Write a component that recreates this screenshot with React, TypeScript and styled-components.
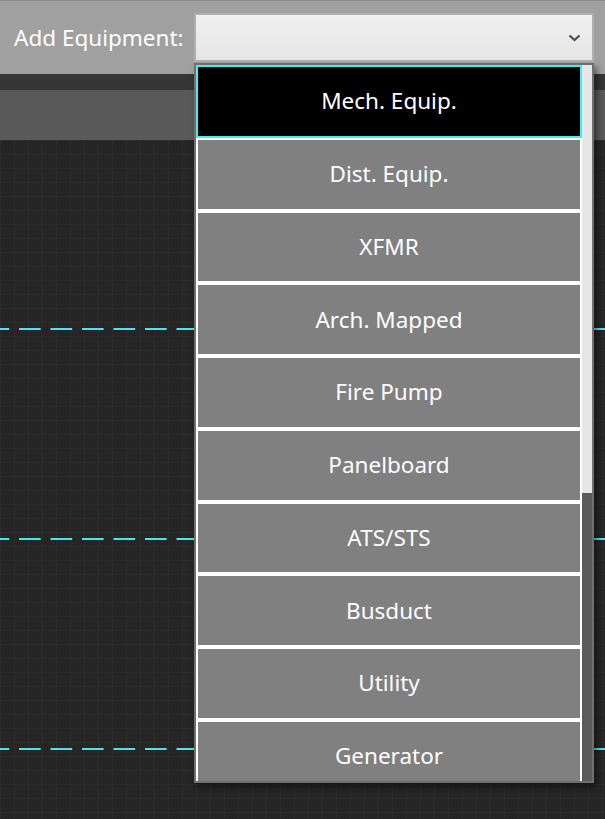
import React from "react";
import styled, { createGlobalStyle } from "styled-components";

const Global = createGlobalStyle`
  html, body { margin: 0; padding: 0; background: #252525; }
  body { width: 605px; height: 819px; overflow: hidden; font-family: "Noto Sans", "Open Sans", sans-serif; }
  #root { width: 605px; height: 819px; }
`;

const Page = styled.div`
  position: relative;
  width: 605px;
  height: 819px;
  display: flex;
  flex-direction: column;
  overflow: hidden;
`;

const TopBar = styled.div`
  height: 74px;
  border-top: 1px solid #8c8c8c;
  background: #a0a0a0;
  display: grid;
  grid-template-columns: 180px 400px;
  align-items: start;
  padding: 12px 0 0 14px;
  box-sizing: border-box;
`;

const Label = styled.div`
  color: #ffffff;
  font-size: 22.5px;
  line-height: 28px;
  padding-top: 11px;
  white-space: nowrap;
`;

const Combo = styled.div`
  height: 49px;
  box-sizing: border-box;
  border: 2px solid #b0b0b0;
  background: linear-gradient(#f0f0f0, #e5e5e5);
  display: flex;
  align-items: center;
  justify-content: flex-end;
  padding-right: 11px;
`;

const DarkBand = styled.div`
  height: 16px;
  background: #363636;
`;

const MidBand = styled.div`
  height: 50px;
  background: #595959;
`;

const Canvas = styled.div`
  flex: 1;
  background-color: #252525;
  background-image:
    linear-gradient(to right, #2b2b2b 1px, transparent 1px),
    linear-gradient(to bottom, #2b2b2b 1px, transparent 1px);
  background-size: 14px 14px;
  display: flex;
  flex-direction: column;
  gap: 208px;
  padding-top: 188px;
`;

const DashLine = styled.div`
  height: 2px;
  width: 100%;
  background-image: linear-gradient(
    to right,
    #4ce6e6 0px,
    #4ce6e6 21.5px,
    transparent 21.5px,
    transparent 31.5px
  );
  background-position: 19px 0;
  background-size: 31.5px 2px;
  background-repeat: repeat-x;
`;

const Popup = styled.div`
  position: absolute;
  left: 194px;
  top: 63px;
  width: 400px;
  height: 720px;
  box-sizing: border-box;
  border: 2px solid #707070;
  background: #ffffff;
  box-shadow: 3px 4px 6px rgba(0, 0, 0, 0.45);
  overflow: hidden;
  display: flex;
`;

const List = styled.div`
  flex: 1;
  height: 100%;
  overflow: hidden;
  display: flex;
  flex-direction: column;
`;

const ScrollTrack = styled.div`
  flex: 0 0 10px;
  height: 100%;
  background: #5a5a5a;
  display: flex;
  flex-direction: column;
`;

const ScrollThumb = styled.div`
  flex: 0 0 428px;
  background: #e6e6e6;
`;

const Item = styled.div<{ $selected?: boolean }>`
  flex: 0 0 72.75px;
  height: 72.75px;
  box-sizing: border-box;
  border: 2px solid ${(p) => (p.$selected ? "#44eeee" : "#ffffff")};
  background: ${(p) => (p.$selected ? "#000000" : "#808080")};
  color: #ffffff;
  font-size: 22.5px;
  display: flex;
  align-items: center;
  justify-content: center;
  padding-bottom: 1px;
  white-space: nowrap;
`;

const items = [
  "Mech. Equip.",
  "Dist. Equip.",
  "XFMR",
  "Arch. Mapped",
  "Fire Pump",
  "Panelboard",
  "ATS/STS",
  "Busduct",
  "Utility",
  "Generator",
];

export default function App() {
  return (
    <Page>
      <Global />
      <TopBar>
        <Label>Add Equipment:</Label>
        <Combo>
          <svg width="13" height="8" viewBox="0 0 13 8">
            <polyline points="1.5,1.5 6.5,6 11.5,1.5" fill="none" stroke="#505050" strokeWidth="2.2" />
          </svg>
        </Combo>
      </TopBar>
      <DarkBand />
      <MidBand />
      <Canvas>
        <DashLine />
        <DashLine />
        <DashLine />
      </Canvas>
      <Popup>
        <List>
          {items.map((t, i) => (
            <Item key={t} $selected={i === 0}>
              {t}
            </Item>
          ))}
        </List>
        <ScrollTrack>
          <ScrollThumb />
        </ScrollTrack>
      </Popup>
    </Page>
  );
}
